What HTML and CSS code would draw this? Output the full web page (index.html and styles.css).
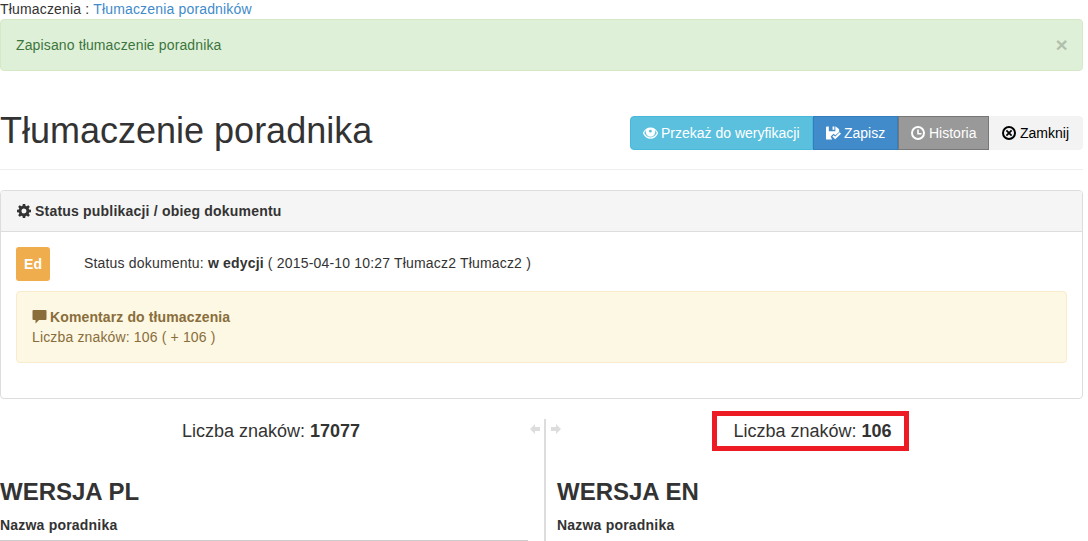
FILE: index.html
```html
<!DOCTYPE html>
<html lang="pl">
<head>
<meta charset="utf-8">
<title>Tłumaczenie poradnika</title>
<link rel="stylesheet" href="styles.css">
</head>
<body>
<div class="page">
  <div class="crumbs">Tłumaczenia : <a href="#">Tłumaczenia poradników</a></div>
  <div class="alert"><span>Zapisano tłumaczenie poradnika</span><span class="close">×</span></div>
  <div class="head">
    <h1>Tłumaczenie poradnika</h1>
    <div class="btns">
      <a class="btn info" href="#"><svg class="ic eye" viewBox="0 0 16 12"><path fill="currentColor" fill-rule="evenodd" d="M8 0C4.600 0 1.800 2 0 5.600v.8C1.800 10 4.600 12 8 12s6.200-2 8-5.600v-.8C14.200 2 11.400 0 8 0zM3.200 2.800a5.200 5.200 0 1 0 9.600 0 10 10 0 0 1 1.900 3.200C13.200 8.800 10.800 10.700 8 10.700S2.800 8.800 1.300 6a10 10 0 0 1 1.900-3.200zM7.900 2.500a1.500 1.500 0 1 0 0 3 1.500 1.500 0 0 0 0-3z"/></svg>Przekaż do weryfikacji</a>
      <a class="btn primary" href="#"><svg class="ic" viewBox="0 0 16 14"><path fill="currentColor" fill-rule="evenodd" d="M0 1a1 1 0 0 1 1-1h2v5h7V0h.5L14 3v3l-4 3.500L8 7.800 5 10.700 6.500 14H1a1 1 0 0 1-1-1zM7 0h2v3.500H7z"/><path fill="none" stroke="currentColor" stroke-width="2" d="M7.500 10l2.300 2.300 5.500-5.300"/></svg>Zapisz</a>
      <a class="btn gray" href="#"><svg class="ic" viewBox="0 0 14 14"><path fill="currentColor" fill-rule="evenodd" d="M7 0a7 7 0 1 1 0 14A7 7 0 0 1 7 0zM7 2a5 5 0 1 0 0 10A5 5 0 0 0 7 2zM6.200 3.500h1.600V7h2.700v1.500H6.200z"/></svg>Historia</a>
      <a class="btn light" href="#"><svg class="ic" viewBox="0 0 14 14"><path fill="currentColor" fill-rule="evenodd" d="M7 0a7 7 0 1 1 0 14A7 7 0 0 1 7 0zM7 2a5 5 0 1 0 0 10A5 5 0 0 0 7 2zM5 3.800L7 5.800l2-2L10.200 5l-2 2 2 2L9 10.200l-2-2-2 2L3.800 9l2-2-2-2z"/></svg>Zamknij</a>
    </div>
  </div>
  <hr class="rule">
  <section class="panel">
    <div class="panel-head"><svg class="gear" viewBox="0 0 14 14"><path fill="currentColor" fill-rule="evenodd" d="M5.800 0h2.400l.4 1.900 1 .4L11.300 1.200 12.800 2.700l-1.100 1.700.4 1L14 5.800v2.400l-1.900.4-.4 1 1.100 1.700-1.500 1.500-1.700-1.100-1 .4L8.200 14H5.800l-.4-1.900-1-.4-1.700 1.100-1.500-1.500 1.100-1.700-.4-1L0 8.200V5.800l1.900-.4.4-1L1.200 2.700 2.700 1.200l1.700 1.100 1-.4zM7 4.500a2.500 2.500 0 1 0 0 5 2.500 2.500 0 0 0 0-5z"/></svg>Status publikacji / obieg dokumentu</div>
    <div class="panel-body">
      <div class="status">
        <span class="badge">Ed</span>
        <span class="status-text">Status dokumentu: <b>w edycji</b> ( 2015-04-10 10:27 Tłumacz2 Tłumacz2 )</span>
      </div>
      <div class="note">
        <div class="note-title"><svg class="bubble" viewBox="0 0 14 14"><path fill="currentColor" d="M1 0h12a1 1 0 0 1 1 1v8a1 1 0 0 1-1 1H6.500L3 13.500V10H1a1 1 0 0 1-1-1V1a1 1 0 0 1 1-1z"/></svg>Komentarz do tłumaczenia</div>
        <div class="note-text">Liczba znaków: 106 ( + 106 )</div>
      </div>
    </div>
  </section>
  <div class="columns">
    <div class="col left">
      <div class="count"><span>Liczba znaków: <b>17077</b></span></div>
      <h2>WERSJA PL</h2>
      <div class="label">Nazwa poradnika</div>
      <div class="field"></div>
    </div>
    <div class="arrows">
      <svg class="arrow" viewBox="0 0 12 12"><path fill="currentColor" d="M6 1L1 6l5 5V8h5V4H6z"/></svg>
      <div class="divider"></div>
      <svg class="arrow" viewBox="0 0 12 12"><path fill="currentColor" d="M6 1l5 5-5 5V8H1V4h5z"/></svg>
    </div>
    <div class="col right">
      <div class="count"><span class="flagged">Liczba znaków: <b>106</b></span></div>
      <h2>WERSJA EN</h2>
      <div class="label">Nazwa poradnika</div>
    </div>
  </div>
</div>
</body>
</html>
```
FILE: styles.css
```css
* { box-sizing: border-box; }
html, body { margin: 0; height: 541px; overflow: hidden; background: #fff; }
body { font: 14px/20px "Liberation Sans", Arial, sans-serif; color: #333; }
.page { width: 1083px; }
a { text-decoration: none; }
.crumbs { height: 19px; line-height: 18px; color: #333; letter-spacing: .17px; }
.crumbs a { color: #428bca; }
.alert { height: 52px; padding: 15px; display: flex; justify-content: space-between; background: #dff0d8; border: 1px solid #d6e9c6; border-radius: 4px; color: #3c763d; letter-spacing: .13px; }
.close { font-size: 21px; font-weight: 700; line-height: 19px; color: #000; opacity: .2; margin-right: -1px; }
.head { display: flex; justify-content: space-between; align-items: center; height: 98px; padding-top: 21px; }
h1 { margin: 0; font-size: 36px; line-height: 40px; font-weight: 500; color: #333; }
.btns { display: flex; margin-top: 5px; }
.btn { height: 34px; padding: 6px 0 6px 12px; display: flex; align-items: center; border: 1px solid transparent; color: #fff; white-space: nowrap; }
.ic { width: 14px; height: 14px; margin-right: 4px; flex: none; }
.eye { width: 15px; height: 12px; margin-right: 3px; }
.info { width: 183px; background: #5bc0de; border-color: #46b8da; border-radius: 4px 0 0 4px; }
.primary { width: 85px; background: #428bca; border-color: #357ebd; }
.primary .ic { width: 15px; margin-right: 3px; }
.gray { width: 91px; background: #999; border-color: #777; }
.light { width: 94px; background: #f3f3f3; border-color: #f3f3f3; color: #000; border-radius: 0 4px 4px 0; }
.rule { margin: 0; border: 0; border-top: 1px solid #eee; }
.panel { margin-top: 20px; height: 209px; border: 1px solid #ddd; border-radius: 4px; }
.panel-head { height: 41px; padding: 10px 16px; display: flex; align-items: center; background: #f5f5f5; border-bottom: 1px solid #ddd; font-weight: 700; border-radius: 3px 3px 0 0; letter-spacing: .2px; }
.gear { width: 14px; height: 14px; margin-right: 4px; }
.panel-body { padding: 15px; }
.status { display: flex; align-items: center; height: 34px; }
.status-text { letter-spacing: .18px; margin-top: -2px; }
.badge { width: 34px; height: 34px; margin-right: 34px; display: flex; align-items: center; justify-content: center; background: #f0ad4e; border-radius: 3px; color: #fff; font-weight: 700; }
.note { margin-top: 10px; height: 72px; padding: 15px; background: #fcf8e3; border: 1px solid #faebcc; border-radius: 4px; color: #8a6d3b; }
.note-title { display: flex; align-items: center; font-weight: 700; letter-spacing: .12px; }
.note-text { letter-spacing: .15px; }
.bubble { width: 15px; height: 14px; margin-right: 3px; }
.columns { display: flex; margin-top: 20px; height: 122px; }
.col { flex: none; }
.left { width: 528px; }
.right { width: 526px; margin-left: -5px; }
.count { height: 24px; display: flex; justify-content: center; align-items: center; font-size: 18px; }
.left .count { padding-left: 14px; }
.right .count { width: 507px; }
.flagged { display: block; flex: none; width: 197px; height: 40px; padding-left: 4px; line-height: 30px; text-align: center; border: 5px solid #ed1c24; }
h2 { margin: 34px 0 0; font-size: 24px; line-height: 30px; font-weight: 700; color: #333; }
.label { margin-top: 8px; font-weight: 700; line-height: 20px; letter-spacing: .2px; }
.field { margin-top: 5px; border-top: 1px solid #ccc; height: 2px; }
.arrows { width: 34px; flex: none; display: flex; align-items: flex-start; color: #ddd; padding-left: 1px; gap: 3px; }
.arrow { width: 12px; height: 12px; margin-top: 4px; flex: none; }
.arrow:last-child { margin-left: 1px; }
.divider { width: 2px; height: 122px; flex: none; background: #ddd; }
```
